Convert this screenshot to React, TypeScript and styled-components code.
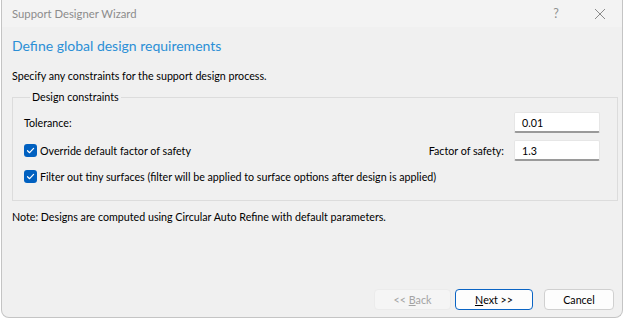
import React from "react";
import styled, { createGlobalStyle } from "styled-components";

const Global = createGlobalStyle`
  html, body { margin: 0; padding: 0; background: #ffffff; }
  body { font-family: Lato, "Noto Sans", sans-serif; font-size: 10.7px; color: #000; }
`;

const Window = styled.div`
  box-sizing: border-box;
  width: 622px;
  height: 318px;
  margin-left: 1px;
  background: #f0f0f0;
  border: 1px solid #c4c4c4;
  border-top: none;
  border-radius: 0 0 8px 8px;
  display: flex;
  flex-direction: column;
  overflow: hidden;
`;

const TitleBar = styled.div`
  height: 27px;
  background: #f3f3f3;
  display: flex;
  align-items: center;
  padding-left: 10px;
  color: #8c8c8c;
  font-size: 11.3px;
  flex-shrink: 0;
`;

const TitleText = styled.span`
  flex: 1;
`;

const TitleButton = styled.div`
  width: 44px;
  height: 27px;
  display: flex;
  align-items: center;
  justify-content: center;
  color: #909090;
  font-size: 12.5px;
`;

const Body = styled.div`
  flex: 1;
  display: flex;
  flex-direction: column;
  padding: 0 4px 7px 10px;
`;

const Heading = styled.div`
  margin-top: 9px;
  font-size: 14px;
  color: #2b8fd6;
  height: 20px;
  line-height: 20px;
`;

const Intro = styled.div`
  margin-top: 12px;
  height: 16px;
  line-height: 16px;
`;

const Group = styled.fieldset`
  margin: 6px 0 0 0;
  padding: 6px 17px 13px 11px;
  border: 1px solid #dcdcdc;
  border-radius: 0;
  min-width: 0;
  display: flex;
  flex-direction: column;
`;

const Legend = styled.legend`
  padding: 0 2px;
  margin-left: 6px;
  line-height: 14px;
`;

const Row = styled.div<{ $gap: number }>`
  display: flex;
  align-items: center;
  height: 21px;
  margin-top: ${(p) => p.$gap}px;
`;

const Label = styled.span`
  flex: 1;
`;

const SideLabel = styled.span`
  margin-right: 10px;
`;

const Input = styled.div`
  box-sizing: border-box;
  width: 86px;
  height: 21px;
  background: #fff;
  border: 1px solid #e6e6e6;
  border-bottom: 2px solid #9a9a9a;
  border-radius: 2px;
  padding: 0 7px;
  display: flex;
  align-items: center;
`;

const CheckBox = styled.span`
  box-sizing: border-box;
  width: 13px;
  height: 13px;
  border-radius: 3px;
  background: #0060c0;
  display: inline-flex;
  align-items: center;
  justify-content: center;
  margin-right: 3px;
  flex-shrink: 0;
`;

const Note = styled.div`
  margin-top: 8px;
  height: 16px;
  line-height: 16px;
`;

const Spacer = styled.div`
  flex: 1;
`;

const Buttons = styled.div`
  display: flex;
  justify-content: flex-end;
  margin-right: 4px;
`;

const Button = styled.div<{ $variant?: "default" | "primary" | "disabled"; $w: number; $ml: number }>`
  box-sizing: border-box;
  width: ${(p) => p.$w}px;
  height: 21px;
  margin-left: ${(p) => p.$ml}px;
  border-radius: 4px;
  display: flex;
  align-items: center;
  justify-content: center;
  white-space: pre;
  background: ${(p) => (p.$variant === "disabled" ? "#f5f5f5" : "#fdfdfd")};
  border: 1px solid
    ${(p) => (p.$variant === "primary" ? "#0a64c4" : p.$variant === "disabled" ? "#ebebeb" : "#d0d0d0")};
  color: ${(p) => (p.$variant === "disabled" ? "#a3a3a3" : "#000")};
`;

const U = styled.span`
  text-decoration: underline;
`;

const Check = () => (
  <svg width="9" height="9" viewBox="0 0 9 9">
    <path d="M1.5 4.7 L3.6 6.7 L7.6 2.4" fill="none" stroke="#fff" strokeWidth="1.2" strokeLinecap="round" strokeLinejoin="round" />
  </svg>
);

export default function App() {
  return (
    <>
      <Global />
      <Window>
        <TitleBar>
          <TitleText>Support Designer Wizard</TitleText>
          <TitleButton>?</TitleButton>
          <TitleButton>
            <svg width="12" height="12" viewBox="0 0 12 12">
              <path d="M1 1 L11 11 M11 1 L1 11" stroke="#8a8a8a" strokeWidth="1" fill="none" />
            </svg>
          </TitleButton>
        </TitleBar>
        <Body>
          <Heading>Define global design requirements</Heading>
          <Intro>Specify any constraints for the support design process.</Intro>
          <Group>
            <Legend>Design constraints</Legend>
            <Row $gap={2}>
              <Label>Tolerance:</Label>
              <Input>0.01</Input>
            </Row>
            <Row $gap={7}>
              <CheckBox><Check /></CheckBox>
              <Label>Override default factor of safety</Label>
              <SideLabel>Factor of safety:</SideLabel>
              <Input>1.3</Input>
            </Row>
            <Row $gap={5}>
              <CheckBox><Check /></CheckBox>
              <Label>Filter out tiny surfaces (filter will be applied to surface options after design is applied)</Label>
            </Row>
          </Group>
          <Note>Note: Designs are computed using Circular Auto Refine with default parameters.</Note>
          <Spacer />
          <Buttons>
            <Button $variant="disabled" $w={77} $ml={0}>{"<< "}<U>B</U>ack</Button>
            <Button $variant="primary" $w={78} $ml={4}><U>N</U>{"ext >>"}</Button>
            <Button $w={70} $ml={11}>Cancel</Button>
          </Buttons>
        </Body>
      </Window>
    </>
  );
}
